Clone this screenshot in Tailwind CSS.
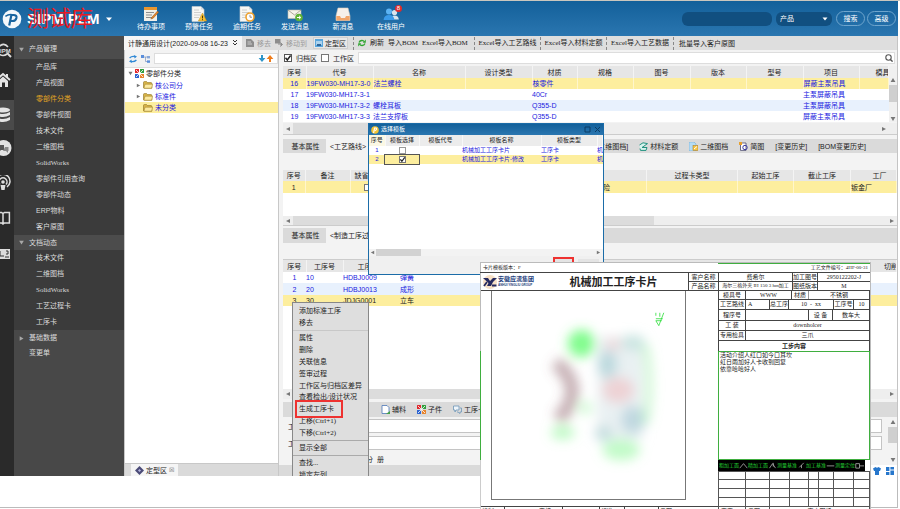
<!DOCTYPE html>
<html lang="zh-CN">
<head>
<meta charset="utf-8">
<title>SIPM PLM</title>
<script src="https://cdn.jsdelivr.net/npm/@tailwindcss/browser@4"></script>
</head>
<body class="bg-white">
<svg class="hidden">
  <symbol id="folder" viewBox="0 0 10 8"><path d="M.5 1.5Q.5.6 1.4.6H3.6L4.6 1.6H8Q8.8 1.6 8.8 2.4V7.2H1.3Q.5 7.2.5 6.4Z" fill="#d9b54a" stroke="#8c6f1c" stroke-width=".6"/><path d="M2 3.2H9.6L8.6 7.2H.9Z" fill="#fbe9a0" stroke="#9b7c22" stroke-width=".5"/></symbol>
  <symbol id="blocks" viewBox="0 0 10 10"><rect x="0" y="0" width="4.4" height="4.4" fill="#e0252b"/><rect x="5.6" y="0" width="4.4" height="4.4" fill="#2f9e3c"/><rect x="0" y="5.6" width="4.4" height="4.4" fill="#2b62d0"/><rect x="5.6" y="5.6" width="4.4" height="4.4" fill="#e8822a"/><path d="M1 1L9 9M9 1L1 9" stroke="#fff" stroke-width=".9"/></symbol>
  <symbol id="check" viewBox="0 0 8 8"><path d="M1.5 3.8L3.3 6L6.6 1.5" fill="none" stroke="#222" stroke-width="1.4"/></symbol>
  <symbol id="left" viewBox="0 0 6 6"><path d="M1 3L5 1V5Z" fill="#777"/></symbol>
  <symbol id="right" viewBox="0 0 6 6"><path d="M5 3L1 1V5Z" fill="#777"/></symbol>
  <symbol id="up" viewBox="0 0 6 6"><path d="M3 1L5.4 5H.6Z" fill="#777"/></symbol>
  <symbol id="down" viewBox="0 0 6 6"><path d="M3 5L5.4 1H.6Z" fill="#777"/></symbol>
  <symbol id="navdown" viewBox="0 0 6 6"><path d="M3 5.4L5.8 .8H.2Z" fill="#a8a8a8"/></symbol>
  <symbol id="navright" viewBox="0 0 6 6"><path d="M5.4 3L.8 .2V5.8Z" fill="#a8a8a8"/></symbol>
  <symbol id="sheet" viewBox="0 0 14 16"><path d="M1 .5H10L13 3.5V15.5H1Z" fill="#f7f7f4" stroke="#c9ced2" stroke-width=".6"/><path d="M10 .5V3.5H13" fill="#d5dbe0"/><path d="M3 4H8M3 6.5H10M3 9H10M3 11.5H8" stroke="#c4c4c4" stroke-width=".8"/></symbol>
</svg>
<div class="relative flex h-screen flex-col overflow-hidden border-t border-[#c9c6be] pr-[2px] font-['Liberation_Sans','Noto_Sans_CJK_SC',sans-serif] text-[7px] leading-[11px] text-[#222]">

  <header class="flex h-[35px] shrink-0 items-center bg-linear-to-b from-[#12609a] to-[#2a76b0] text-white">
    <div class="flex w-[127px] items-center gap-[5px] pl-[2px]">
      <svg class="h-5 w-5 shrink-0" viewBox="0 0 20 20"><circle cx="10" cy="10" r="9.3" fill="#f4f8fb"/><path d="M7.2 16.5L9.4 6H11.6Q15 6 14.4 8.9Q13.6 12 10.4 12H8.8" fill="none" stroke="#1a659f" stroke-width="2.2"/><path d="M3.4 7.4Q7 4.6 11.6 6" fill="none" stroke="#1a659f" stroke-width="1.4"/></svg>
      <h1 class="relative text-[15px] leading-5 font-bold whitespace-nowrap">SIPM PLM
        <span class="absolute top-0 left-0 text-[22px] leading-5 font-normal text-[#e81a22]">测试库</span>
      </h1>
      <svg class="h-2 w-2 shrink-0" viewBox="0 0 8 8"><path d="M1 2.5H7L4 6Z" fill="#fff"/></svg>
    </div>
    <nav class="flex leading-[9px]">
      <a href="#" class="flex w-12 flex-col items-center"><svg class="h-4 w-4" viewBox="0 0 16 16"><rect x="1" y="1" width="13" height="14" fill="#f2efe8"/><rect x="1" y="1" width="13" height="3" fill="#e9962f"/><path d="M3 6.5H11M3 9H9M3 11.5H9" stroke="#8e8e8e"/><path d="M14.5 5L9 11L7.8 13L10.2 12.2L15.6 6.2Z" fill="#e98424" stroke="#8a5524" stroke-width=".5"/></svg><span>待办事项</span></a>
      <a href="#" class="flex w-12 flex-col items-center"><svg class="h-4 w-4" viewBox="0 0 16 16"><use href="#sheet" width="14" height="16"/><path d="M11.5 7L15.6 15H7.4Z" fill="#f6c033" stroke="#c98f15" stroke-width=".5"/><path d="M11.5 9.6V12.4M11.5 13.2V14.2" stroke="#4a3a08"/></svg><span>预警任务</span></a>
      <a href="#" class="flex w-12 flex-col items-center"><svg class="h-4 w-4" viewBox="0 0 16 16"><use href="#sheet" width="14" height="16"/><circle cx="11" cy="11" r="4" fill="#fff" stroke="#efa22d" stroke-width="1.6"/><path d="M11 8.8V11.2H13" fill="none" stroke="#777" stroke-width=".8"/></svg><span>逾期任务</span></a>
      <a href="#" class="flex w-12 flex-col items-center"><svg class="h-4 w-4" viewBox="0 0 16 16"><rect x="1" y="4" width="13" height="8.5" fill="#f5f3ea" stroke="#bdb8a8" stroke-width=".6"/><path d="M1 4L7.5 9L14 4" fill="none" stroke="#9c9786" stroke-width=".8"/><circle cx="12" cy="11.5" r="3.8" fill="#5fb336"/><path d="M10 11.5H13.5M12 9.8L13.8 11.5L12 13.2" stroke="#fff" fill="none"/></svg><span>发送消息</span></a>
      <a href="#" class="flex w-12 flex-col items-center"><svg class="h-4 w-4" viewBox="0 0 16 16"><path d="M3 2H13L15 10V14.5H1V10Z" fill="#f6f1ea" stroke="#d9cabb" stroke-width=".6"/><path d="M1.3 10H5L6 12H10L11 10H14.7V14.5H1.3Z" fill="#f1a66a"/></svg><span>新消息</span></a>
      <a href="#" class="relative flex w-12 flex-col items-center"><svg class="h-4 w-4" viewBox="0 0 16 16"><circle cx="11.5" cy="6.5" r="2.6" fill="#d9e4ee"/><path d="M7.5 13.5Q8 9.6 11.5 9.6Q15.4 9.6 15.8 13.5Z" fill="#d9e4ee"/><circle cx="6" cy="5.5" r="3" fill="#5cb3f4"/><path d="M.6 14Q1 9 6 9Q11 9 11.4 14Z" fill="#3b9bea"/></svg><span>在线用户</span><b class="absolute -top-px right-[13px] h-[7px] w-[7px] rounded-full bg-[#e02b2b] text-center text-[6px] leading-[7px] font-normal">8</b></a>
    </nav>
    <form class="ml-auto flex items-center gap-1 pr-[2px]">
      <input type="text" aria-label="搜索关键字" class="h-[14px] w-[90px] rounded-md bg-[#114f80]">
      <div class="relative"><select aria-label="类型" class="h-[14px] w-14 appearance-none rounded-md bg-[#114f80] pl-1 text-[7px] text-white"><option>产品</option></select><svg class="pointer-events-none absolute top-[4px] right-1 h-[6px] w-[6px]" viewBox="0 0 6 6"><path d="M.5 1.5H5.5L3 4.6Z" fill="#fff"/></svg></div>
      <button type="button" class="h-[15px] w-[29px] rounded-full border border-[#6fa5cd]">搜索</button>
      <button type="button" class="-ml-[2px] h-[15px] w-[29px] rounded-full border border-[#6fa5cd]">高级</button>
    </form>
  </header>

  <div class="flex min-h-0 flex-1 border-r border-[#c4c4c4]">
    <aside class="flex w-[14px] shrink-0 flex-col bg-[#2a2a2a]">
      <a href="#" aria-label="查询" class="flex h-[30px] items-center"><svg class="h-4 w-[13px]" viewBox="0 0 13 16"><path d="M-1 3.5Q4 -1 8 4M-1 11Q3 14 7 11" fill="none" stroke="#ddd" stroke-width="1.6"/><path d="M7 10L11 14" stroke="#ddd" stroke-width="2"/><text x="-4" y="10" font-size="6" font-weight="bold" fill="#ddd">SIPM</text></svg></a>
      <a href="#" aria-label="主页" class="flex h-[34px] items-center pb-[6px]"><svg class="h-4 w-[13px]" viewBox="0 0 13 16"><path d="M-4 8L3 2L10 8" fill="none" stroke="#e4e4e4" stroke-width="2"/><path d="M-2 9L3 4.6L8 9V15H5V10.5H2V15H-2Z" fill="#e4e4e4"/><path d="M6 2H8V6L6 4Z" fill="#e4e4e4"/></svg></a>
      <a href="#" aria-label="产品数据" class="flex h-[30px] items-center bg-[#4a4a4a]"><svg class="h-4 w-[13px]" viewBox="0 0 13 16"><ellipse cx="3" cy="3" rx="7" ry="2.6" fill="#e4e4e4"/><path d="M-4 5Q3 9 10 5V8Q3 12 -4 8ZM-4 10Q3 14 10 10V13Q3 17 -4 13Z" fill="#e4e4e4"/></svg></a>
      <a href="#" aria-label="交流" class="flex h-9 items-center"><svg class="h-[18px] w-[13px]" viewBox="0 0 13 18"><circle cx="3.5" cy="9" r="8" fill="#e2e2e2"/><path d="M-3 6H4V11H1L-1 13V11H-3Z" fill="#555"/><path d="M5 8H8.5V12H8V14L6 12H3" fill="#888"/></svg></a>
      <a href="#" aria-label="广播" class="flex h-[34px] items-center"><svg class="h-4 w-[13px]" viewBox="0 0 13 16"><path d="M-1 12A7 7 0 1 1 7 12M0 9.5A4 4 0 1 1 6 9.5" fill="none" stroke="#ddd" stroke-width="1.5"/><circle cx="3" cy="7" r="1.8" fill="#ddd"/><path d="M.5 10H5.5L4.6 15H1.4Z" fill="#ddd"/></svg></a>
      <a href="#" aria-label="手册" class="flex h-9 items-center"><svg class="h-4 w-[13px]" viewBox="0 0 13 16"><path d="M-4 2.5H1.5L3 3.5L4.5 2.5H9.4V13H4.5L3 14L1.5 13H-4ZM3 3.5V14" fill="none" stroke="#ddd" stroke-width="1.5"/></svg></a>
      <a href="#" aria-label="终端" class="flex h-9 items-center"><svg class="h-[10px] w-[13px]" viewBox="0 0 13 10"><rect x="-2" y="0" width="12" height="10" fill="#ddd"/><path d="M0 2V7H4M6 2H8V5H6M5 8H9" stroke="#333" fill="none"/></svg></a>
    </aside>
    <nav class="w-[110px] shrink-0 bg-[#484848] leading-4 text-[#dcdcdc]">
      <a href="#" class="flex h-[23px] items-center gap-[5px] bg-[#4c4c4c] pt-[3px] pl-[5px]"><svg class="h-[5px] w-[5px]"><use href="#navdown"/></svg>产品管理</a>
      <div class="flex flex-col bg-[#3b3b3b] pl-[22px]">
        <a href="#">产品库</a><a href="#">产品视图</a><a href="#" class="text-[#e2a424]">零部件分类</a><a href="#">零部件视图</a><a href="#">技术文件</a><a href="#">二维图档</a><a href="#" class="font-['Liberation_Serif']">SolidWorks</a><a href="#">零部件引用查询</a><a href="#">零部件动态</a><a href="#">ERP物料</a><a href="#">客户原图</a>
      </div>
      <a href="#" class="flex h-[15px] items-center gap-[5px] bg-[#4c4c4c] pl-[5px]"><svg class="h-[5px] w-[5px]"><use href="#navdown"/></svg>文档动态</a>
      <div class="flex flex-col bg-[#3b3b3b] pl-[22px]">
        <a href="#">技术文件</a><a href="#">二维图档</a><a href="#" class="font-['Liberation_Serif']">SolidWorks</a><a href="#">工艺过程卡</a><a href="#">工序卡</a>
      </div>
      <a href="#" class="flex h-4 items-center gap-[5px] pl-[5px]"><svg class="h-[5px] w-[5px]"><use href="#navright"/></svg>基础数据</a>
      <a href="#" class="block h-[14px] pl-[15px] leading-[14px]">变更单</a>
    </nav>

    <main class="flex min-w-0 flex-1 flex-col bg-[#f3f3f3]">
      <div class="flex h-[14px] shrink-0 items-center bg-[#dedede] whitespace-nowrap">
        <button class="flex h-full w-[118px] items-center gap-1 bg-[#f6f6f6] pl-1">计静通用设计(2020-09-08 16-23<svg class="h-[6px] w-[6px] shrink-0" viewBox="0 0 6 6"><path d="M1 0L3 2L5 0M1 3L3 5L5 3" fill="none" stroke="#333"/></svg></button>
        <button class="flex w-[33px] items-center gap-[3px] pl-1 text-[#9a9a9a]" disabled><svg class="h-2 w-2" viewBox="0 0 8 8"><path d="M0 0H5L8 3V8H0Z" fill="#8d8d8d"/><path d="M1.5 3H5M1.5 5H6" stroke="#ccc"/></svg>移去</button>
        <button class="flex w-[38px] items-center gap-[3px] text-[#9a9a9a]" disabled><svg class="h-2 w-2" viewBox="0 0 8 8"><path d="M0 0H5V4H0ZM3 5H7M5.5 3.5L7.5 5.5L5.5 7.5" fill="#8d8d8d" stroke="#8d8d8d"/></svg>移动到</button>
        <button class="mr-[5px] flex h-3 items-center gap-[2px] border border-[#cfcfcf] bg-[#e8e8e8] px-px"><svg class="h-2 w-2" viewBox="0 0 8 8"><rect width="8" height="8" fill="#5aa6dc"/><path d="M1 5H7M1 3H7" stroke="#fff"/><rect x="2" y="5" width="4" height="2" fill="#2c669b"/></svg>定型区</button>
        <div class="flex h-[13px] w-[121px] items-center gap-1 border-l border-dashed border-[#888] pl-1 font-['Liberation_Serif','Noto_Sans_CJK_SC',serif]"><button class="flex items-center gap-1"><svg class="h-2 w-2" viewBox="0 0 8 8"><path d="M1 3.4Q2 1 5 1.6L6 2.4M7 4.6Q6 7 3 6.4L2 5.6" fill="none" stroke="#2fa52f" stroke-width="1.3"/><path d="M7.8.6V3.8H4.8ZM.2 7.4V4.2H3.2Z" fill="#2fa52f"/></svg>刷新</button><button>导入BOM</button><button>Excel导入BOM</button></div>
        <div class="flex h-[13px] w-[66px] items-center justify-center border-l border-dashed border-[#888] font-['Liberation_Serif','Noto_Sans_CJK_SC',serif]"><button>Excel导入工艺路线</button></div>
        <div class="flex h-[13px] w-[66px] items-center justify-center border-l border-dashed border-[#888] font-['Liberation_Serif','Noto_Sans_CJK_SC',serif]"><button>Excel导入材料定额</button></div>
        <div class="flex h-[13px] w-[67px] items-center justify-center border-l border-dashed border-[#888] font-['Liberation_Serif','Noto_Sans_CJK_SC',serif]"><button>Excel导入工艺数据</button></div>
        <div class="flex h-[13px] items-center border-l border-dashed border-[#888] px-[5px]"><button>批量导入客户原图</button></div>
      </div>

      <div class="flex min-h-0 flex-1">
        <section class="flex w-[155px] shrink-0 flex-col border-x border-[#c8c8c8]">
          <div class="flex h-[17px] shrink-0 items-center gap-1 pl-1">
            <svg class="h-2 w-2 shrink-0" viewBox="0 0 8 8"><path d="M.6 3Q3 .6 6 1.6M7.4 5Q5 7.4 2 6.4" fill="none" stroke="#3189d6" stroke-width="1.3"/><path d="M5 0L8 1.6L5.6 3.6ZM3 8L0 6.4L2.4 4.4Z" fill="#3189d6"/></svg>
            <svg class="h-2 w-[9px] shrink-0" viewBox="0 0 9 8"><rect y="0" width="3" height="3" fill="#5a8edb"/><rect x="6" y="1" width="3" height="2.4" fill="#88a8da"/><rect x="6" y="5.4" width="3" height="2.4" fill="#5a8edb"/><path d="M3 2H6M4.5 2V6.5H6" fill="none" stroke="#7a93bd" stroke-width=".7"/></svg>
            <div class="relative min-w-0 flex-1"><input type="text" aria-label="查找分类" class="block h-[11px] w-full border border-[#ddd] bg-white"><svg class="absolute top-[2px] right-1 h-[7px] w-4" viewBox="0 0 16 7"><path d="M3 0V3H.6L4 7L7.4 3H5V0Z" fill="#2d95c9"/><path d="M11 7V4H8.6L12 0L15.4 4H13V7Z" fill="#ee7c1c"/></svg></div>
          </div>
          <ul class="min-h-0 flex-1 border-t border-[#ddd] bg-white text-[#1a1ae0]">
            <li class="flex h-[11px] items-center gap-[2px] pl-[3px] text-[#222]"><svg class="h-[5px] w-[5px]" viewBox="0 0 6 6"><use href="#down"/></svg><svg class="h-[9px] w-[9px]"><use href="#blocks"/></svg>零部件分类</li>
            <li class="flex h-3 items-center gap-[2px] pl-[11px]"><svg class="h-[5px] w-[5px]" viewBox="0 0 6 6"><use href="#right"/></svg><svg class="h-2 w-[10px]"><use href="#folder"/></svg>核公司分</li>
            <li class="flex h-[11px] items-center gap-[2px] pl-[11px]"><svg class="h-[5px] w-[5px]" viewBox="0 0 6 6"><use href="#right"/></svg><svg class="h-2 w-[10px]"><use href="#folder"/></svg>标准件</li>
            <li class="flex h-[11px] items-center gap-[2px] bg-[#fdee9e] pl-[18px]"><svg class="h-2 w-[10px]"><use href="#folder"/></svg>未分类</li>
          </ul>
          <div class="flex h-[13px] shrink-0 items-center border-t border-[#c8c8c8] bg-[#dadada] pl-[6px]"><button class="flex h-full items-center gap-[2px] bg-[#f5f5f5] px-1"><svg class="h-[9px] w-[9px]" viewBox="0 0 9 9"><path d="M4.5 0L9 4.5L4.5 9L0 4.5Z" fill="#4c4c78"/><path d="M4.5 3L6 4.5L4.5 6L3 4.5Z" fill="#b6b6e0"/></svg>定型区<span class="text-[6px] text-[#666]">☒</span></button></div>
        </section>

        <section class="flex min-w-0 flex-1 flex-col pl-1">
          <div class="flex h-4 shrink-0 items-center gap-1 pr-[2px] pl-px">
            <label class="flex items-center gap-1"><span class="relative h-2 w-2"><input type="checkbox" checked class="peer block h-2 w-2 appearance-none border border-[#555] bg-white"><svg class="pointer-events-none absolute inset-0 hidden h-2 w-2 peer-checked:block"><use href="#check"/></svg></span>归档区</label>
            <label class="flex items-center gap-1"><input type="checkbox" class="block h-2 w-2 appearance-none border border-[#777] bg-white">工作区</label>
            <div class="relative min-w-0 flex-1"><input type="search" aria-label="查询零部件" class="block h-3 w-full border border-[#ddd] bg-white"><svg class="absolute top-[2px] right-[2px] h-2 w-2" viewBox="0 0 8 8"><circle cx="3.5" cy="3.5" r="2.7" fill="none" stroke="#555" stroke-width="1.1"/><path d="M5.4 5.4L7.6 7.6" stroke="#555" stroke-width="1.4"/></svg></div>
          </div>

          <div class="flex shrink-0">
            <table class="w-full min-w-0 flex-1 table-fixed border-collapse bg-white whitespace-nowrap text-[#1a1ae0]">
              <colgroup><col class="w-[23px]"><col class="w-[67px]"><col class="w-[92px]"><col class="w-[67px]"><col class="w-[45px]"><col class="w-14"><col class="w-[57px]"><col class="w-14"><col class="w-[57px]"><col class="w-14"><col></colgroup>
              <thead class="bg-[#e6e6e6] text-[#222]"><tr class="h-3 *:overflow-hidden *:border-r *:border-[#f4f4f4] *:p-0 *:font-normal"><th>序号</th><th>代号</th><th>名称</th><th>设计类型</th><th>材质</th><th>规格</th><th>图号</th><th>版本</th><th>型号</th><th>项目</th><th class="pl-4! text-left">模具</th></tr></thead>
              <tbody>
                <tr class="h-[11px] bg-[#fdee9e] *:border-r *:border-[#fff6cc] *:p-0"><td class="text-center">16</td><td>19FW030-MH17-3-0</td><td>法兰螺栓</td><td></td><td>核零件</td><td></td><td></td><td></td><td></td><td>屏蔽主泵吊具</td><td></td></tr>
                <tr class="h-[11px] *:p-0"><td class="text-center">17</td><td>19FW030-MH17-3-1</td><td></td><td></td><td>40Cr</td><td></td><td></td><td></td><td></td><td>主泵屏蔽吊具</td><td></td></tr>
                <tr class="h-[11px] bg-[#e8f1fd] *:p-0"><td class="text-center">18</td><td>19FW030-MH17-3-2</td><td>螺栓耳板</td><td></td><td>Q355-D</td><td></td><td></td><td></td><td></td><td>主泵屏蔽吊具</td><td></td></tr>
                <tr class="h-[11px] *:p-0"><td class="text-center">19</td><td>19FW030-MH17-3-3</td><td>法兰支撑板</td><td></td><td>Q355-D</td><td></td><td></td><td></td><td></td><td>屏蔽主泵吊具</td><td></td></tr>
              </tbody>
            </table>
            <div class="flex w-2 shrink-0 flex-col items-center justify-end gap-[2px] bg-[#f0f0f0]"><svg class="h-[6px] w-[6px]"><use href="#up"/></svg><div class="h-[17px] w-full bg-[#cfcfcf]"></div><svg class="mt-3 h-[6px] w-[6px]"><use href="#down"/></svg></div>
          </div>
          <div class="mt-px flex h-3 shrink-0 items-center border-b border-[#ccc] bg-[#eee]"><svg class="mx-[2px] h-[6px] w-[6px]"><use href="#left"/></svg><div class="h-full w-[300px] bg-[#dcdcdc]"></div><svg class="mr-[10px] ml-auto h-[6px] w-[6px]"><use href="#right"/></svg></div>

          <div class="mt-1 flex h-[14px] shrink-0 items-stretch bg-[#dadada] whitespace-nowrap">
            <button class="w-[43px] pl-[2px] text-center">基本属性</button>
            <button class="w-[60px] bg-[#f3f3f3] pl-1 text-left">&lt;工艺路线&gt;</button>
            <div class="ml-auto flex items-center gap-[11px] pr-[31px]">
              <button>[二维图档]</button>
              <button class="flex items-center gap-[2px]"><svg class="h-[9px] w-[9px]" viewBox="0 0 9 9"><path d="M.5 3L4 .8L8.5 1.6L3 5.5H8L7 8.4H1.5L1 6.5" fill="#d6f3ee" stroke="#21917f" stroke-width="1"/></svg>材料定额</button>
              <button class="flex items-center gap-[2px]"><svg class="h-[9px] w-[9px]" viewBox="0 0 9 9"><path d="M0 0H5L7 2V9H0Z" fill="#b5dcf5" stroke="#62a3cf" stroke-width=".5"/><rect x="4" y="3.5" width="5" height="5" fill="#f7c546" stroke="#a5761e" stroke-width=".5"/><path d="M5 7L8 4.5" stroke="#fff"/></svg>二维图档</button>
              <button class="flex items-center gap-[2px]"><svg class="h-[9px] w-[9px]" viewBox="0 0 9 9"><path d="M1.5 1H7V8.4H1.5Z" fill="#fff" stroke="#35355f" stroke-width=".7"/><path d="M0 0H3V3H0Z" fill="#e8a02c"/><circle cx="6" cy="5.5" r="2.2" fill="none" stroke="#3b3ba0" stroke-width="1"/></svg>简图</button>
              <button>[变更历史]</button>
              <button>[BOM变更历史]</button>
            </div>
          </div>
          <div class="h-[17px] shrink-0"></div>
          <div class="h-[46px] shrink-0 bg-white">
            <table class="w-full table-fixed border-collapse whitespace-nowrap">
              <colgroup><col class="w-[22px]"><col class="w-[45px]"><col class="w-9"><col><col class="w-[44px]"><col class="w-[91px]"><col class="w-14"><col class="w-[57px]"><col class="w-[46px]"></colgroup>
              <thead class="bg-[#e6e6e6]"><tr class="h-[11px] *:overflow-hidden *:border-r *:border-[#f4f4f4] *:p-0 *:font-normal"><th>序号</th><th>备注</th><th class="pl-1! text-left">缺省</th><th></th><th></th><th>过程卡类型</th><th>起始工序</th><th>截止工序</th><th class="pl-3!">工厂</th></tr></thead>
              <tbody><tr class="h-3 bg-[#fdee9e] *:border-r *:border-[#fff6cc] *:p-0"><td class="text-center">1</td><td></td><td><input type="checkbox" aria-label="缺省" class="ml-[13px] block h-[7px] w-[7px] appearance-none border border-[#777] bg-white"></td><td></td><td>险</td><td></td><td></td><td></td><td>钣金厂</td></tr></tbody>
            </table>
          </div>
          <div class="flex h-[10px] shrink-0 items-center border-b border-[#ccc] bg-[#eee]"><svg class="mx-[2px] h-[6px] w-[6px]"><use href="#left"/></svg><div class="h-full w-[361px] bg-[#dcdcdc]"></div><svg class="mr-[2px] ml-auto h-[6px] w-[6px]"><use href="#right"/></svg></div>

          <div class="mt-[2px] flex h-[15px] shrink-0 bg-[#dadada] whitespace-nowrap"><button class="w-[43px] pl-[2px] text-center">基本属性</button><button class="w-[60px] bg-[#f3f3f3] pl-1 text-left">&lt;制造工序过程&gt;</button></div>
          <div class="h-4 shrink-0"></div>
          <div class="min-h-0 flex-1 border-t border-[#ccc] bg-white">
            <table class="w-full table-fixed border-collapse whitespace-nowrap text-[#1a1ae0]">
              <colgroup><col class="w-[23px]"><col class="w-[37px]"><col class="w-[57px]"><col class="w-[60px]"><col><col class="w-[27px]"></colgroup>
              <thead class="bg-[#e6e6e6] text-[#222]"><tr class="h-3 *:border-r *:border-[#f4f4f4] *:p-0 *:font-normal"><th>序号</th><th>工序号</th><th>工序编码</th><th>工序名称</th><th></th><th class="overflow-hidden pl-[14px]! text-left">切削</th></tr></thead>
              <tbody>
                <tr class="h-[11px] *:p-0"><td class="text-center">1</td><td>10</td><td>HDBJ0009</td><td>弹簧</td><td></td><td></td></tr>
                <tr class="h-3 bg-[#e8f1fd] *:p-0"><td class="text-center">2</td><td>20</td><td>HDBJ0013</td><td>成形</td><td></td><td></td></tr>
                <tr class="h-[11px] bg-[#fdee9e] text-[#222] *:p-0"><td class="text-center">3</td><td>30</td><td>JDJG0001</td><td>立车</td><td></td><td></td></tr>
              </tbody>
            </table>
          </div>
          <div class="flex h-[10px] shrink-0 items-center bg-[#eee]"><svg class="mx-[2px] h-[6px] w-[6px]"><use href="#left"/></svg><div class="h-full w-[400px] bg-[#dcdcdc]"></div><svg class="mr-[2px] ml-auto h-[6px] w-[6px]"><use href="#right"/></svg></div>
          <div class="mt-[3px] flex h-[15px] shrink-0 items-center gap-[11px] bg-[#dadada] pl-[98px] whitespace-nowrap">
            <button class="flex items-center gap-[2px]"><svg class="h-[9px] w-[9px]" viewBox="0 0 9 9"><path d="M1 .5H6L8 2.5V8.5H1Z" fill="#fff" stroke="#4b77b8" stroke-width=".8"/><path d="M5 9L9 6V9Z" fill="#44a047"/></svg>辅料</button>
            <button class="flex items-center gap-[2px]"><svg class="h-[9px] w-[9px]" viewBox="0 0 10 10"><use href="#blocks"/></svg>子件</button>
            <button class="flex items-center gap-[2px]"><svg class="h-[9px] w-[9px]" viewBox="0 0 9 9"><path d="M.5 1H6V5H3L2 7V5H.5Z" fill="#eef5fb" stroke="#6c95b8" stroke-width=".8"/><path d="M7 3H8.5V7H7V8.5L5 7H4" fill="none" stroke="#6c95b8" stroke-width=".8"/></svg>工序卡</button>
          </div>
          <div class="flex h-12 shrink-0">
            <form class="flex min-w-0 flex-1 flex-col gap-[3px] overflow-hidden pt-[2px] pr-[6px] pl-[5px]">
              <label class="flex h-[14px] shrink-0 items-center gap-1"><span class="w-[72px]">工序</span><input type="text" class="h-full min-w-0 flex-1 border border-[#c4c4c4] bg-white"></label>
              <label class="flex h-[14px] shrink-0 items-center gap-1"><span class="w-[72px]">工时</span><input type="text" class="h-full min-w-0 flex-1 border border-[#c4c4c4] bg-white"></label>
              <div class="pl-[78px] leading-[14px]">分&nbsp; 册</div>
            </form>
            <div class="flex w-[9px] shrink-0 flex-col items-center gap-[2px] pt-[2px]"><svg class="h-[6px] w-[6px] shrink-0"><use href="#up"/></svg><div class="h-4 w-full shrink-0 bg-[#cfcfcf]"></div><svg class="mt-3 h-[6px] w-[6px] shrink-0"><use href="#down"/></svg></div>
          </div>
          <div class="-ml-1 flex h-[11px] shrink-0 justify-end bg-[#dadada]">
            <div class="flex h-full w-7 items-center justify-center gap-[5px] bg-white"><svg class="h-2 w-2" viewBox="0 0 8 8"><path d="M0 1.5L2.5 0Q4 1.5 5.5 0L8 1.5L7 4H6V8H2V4H1Z" fill="#2777cc"/></svg><svg class="h-2 w-2" viewBox="0 0 8 8"><path d="M0 0H3.4V4H0ZM4.4 0H8V2.6H4.4ZM0 5H3.4V8H0ZM4.4 3.6H8V8H4.4Z" fill="#2777cc"/></svg></div>
          </div>
        </section>
      </div>
    </main>
  </div>
  <footer class="mb-px h-8 shrink-0 border-r border-b border-[#bbb] bg-white"></footer>

  <!-- Row context menu -->
  <menu class="absolute top-[301px] left-[292px] flex h-[174px] w-[77px] flex-col overflow-hidden border border-b-0 border-[#888] bg-[#dedede] pt-[2px] font-['Liberation_Serif','Noto_Sans_CJK_SC',serif] leading-3 whitespace-nowrap *:shrink-0">
    <button class="pl-[6px] text-left">添加标准工序</button><button class="pl-[6px] text-left">移去</button>
    <hr class="my-px border-[#c8c8c8]">
    <button class="pl-[6px] text-left">属性</button><button class="pl-[6px] text-left">删除</button><button class="pl-[6px] text-left">关联信息</button><button class="pl-[6px] text-left">签审过程</button><button class="pl-[6px] text-left">工作区与归档区差异</button><button class="h-[11px] pl-[6px] text-left leading-[11px]">查看检出/设计状况</button>
    <button class="relative pl-[6px] text-left">生成工序卡<span class="absolute -top-[3px] left-[2px] h-[18px] w-12 border-2 border-[#ee3230]"></span></button>
    <button class="pl-[6px] text-left">上移(Ctrl+1)</button><button class="pl-[6px] text-left">下移(Ctrl+2)</button>
    <hr class="my-px border-[#aaa]">
    <button class="pl-[6px] text-left">显示全部</button>
    <hr class="my-px border-[#aaa]">
    <button class="pl-[6px] text-left">查找...</button><button class="pl-[6px] text-left">锁定左列</button>
  </menu>

  <!-- Template chooser -->
  <div role="dialog" aria-label="选择模板" class="absolute top-[122px] left-[368px] flex h-[152px] w-[236px] flex-col border border-[#1b6ca8] bg-[#f0f0f0] text-[6px] leading-[9px]">
    <div class="flex h-[11px] shrink-0 items-center gap-[2px] bg-linear-to-b from-[#12609a] to-[#2a76b0] px-[2px] text-white"><svg class="h-2 w-2" viewBox="0 0 8 8"><circle cx="4" cy="4" r="3.8" fill="#f2c335"/><path d="M2.6 7L3.6 2H5Q6.6 3.4 4 4.6" fill="none" stroke="#fff" stroke-width="1.2"/></svg>选择模板<svg class="ml-auto h-[7px] w-[17px]" viewBox="0 0 17 7"><path d="M1 1H6V6H1ZM11 1L16 6M16 1L11 6" fill="none" stroke="#0b3d66" stroke-width="1"/></svg></div>
    <div class="min-h-0 flex-1 bg-white">
      <table class="w-full table-fixed border-collapse whitespace-nowrap text-[#1a1ae0]">
        <colgroup><col class="w-4"><col class="w-[34px]"><col class="w-[43px]"><col class="w-[79px]"><col class="w-14"><col></colgroup>
        <thead class="bg-[#ececec] text-[#222]"><tr class="h-[11px] *:border-r *:border-[#f8f8f8] *:p-0 *:font-normal"><th class="bg-[#fbf8e4]">序号</th><th>模板选择</th><th>模板代号</th><th>模板名称</th><th>模板类型</th><th></th></tr></thead>
        <tbody>
          <tr class="h-[9px] *:p-0"><td class="text-center">1</td><td><input type="checkbox" aria-label="选择模板1" class="mx-auto block h-[7px] w-[7px] appearance-none border border-[#999] bg-white"></td><td></td><td>机械加工工序卡片</td><td>工序卡</td><td class="overflow-hidden">机</td></tr>
          <tr class="h-[9px] bg-[#fdee9e] *:p-0"><td class="text-center">2</td><td class="outline outline-[#555]"><span class="relative mx-auto block h-[7px] w-[7px]"><input type="checkbox" checked aria-label="选择模板2" class="peer block h-[7px] w-[7px] appearance-none border border-[#777] bg-white"><svg class="pointer-events-none absolute inset-0 hidden h-[7px] w-[7px] peer-checked:block"><use href="#check"/></svg></span></td><td></td><td>机械加工工序卡片-修改</td><td>工序卡</td><td class="overflow-hidden">机</td></tr>
        </tbody>
      </table>
    </div>
    <div class="flex h-[7px] shrink-0 items-center bg-[#f3f3f3]"><svg class="mx-px h-[5px] w-[5px]" viewBox="0 0 6 6"><use href="#left"/></svg><div class="h-full w-[45px] bg-[#d2d2d2]"></div><svg class="mr-[2px] ml-auto h-[5px] w-[5px]" viewBox="0 0 6 6"><use href="#right"/></svg></div>
    <div class="flex h-[18px] shrink-0 justify-end gap-1 pt-px pr-1"><button aria-label="确定" class="h-3 w-[21px] border-2 border-[#ee3230] bg-[#e4e4e4]"></button><button aria-label="取消" class="mt-[2px] h-3 w-[21px] bg-[#e4e4e4]"></button></div>
  </div>

  <!-- Process card preview -->
  <article class="absolute top-[261px] left-[480px] flex h-[260px] w-[391px] flex-col border-t border-r border-[#bbb] bg-white font-['Liberation_Serif','Noto_Sans_CJK_SC',serif] text-[6px] leading-[8px] text-[#222]">
    <div class="flex h-[9px] shrink-0 items-center border-l border-[#bbb]"><span class="flex-1 pl-[2px] text-[5px]">卡片模板版本：F</span><span class="h-full w-[152px] border-t border-[#3fae3f] pr-[2px] text-right text-[5px]">工艺文件编号：4HF-00-31</span></div>
    <div class="flex min-h-0 flex-1 border-t border-[#444]">
      <div class="flex w-px shrink-0 flex-col"><div class="h-[78px] bg-[#bbb]"></div><div class="h-[109px] bg-[#3fae3f]"></div><div class="flex-1 bg-[#ccc]"></div></div>
      <div class="flex min-w-0 flex-1 flex-col">
        <div class="flex h-[18px] shrink-0 items-center border-b border-[#444]">
          <svg class="ml-[2px] h-[14px] w-[14px] shrink-0" viewBox="0 0 14 14"><circle cx="7" cy="7" r="7" fill="#f7e0c6"/><path d="M0 3H5L7 6L10 3H14L10 7L8 11H4L5.5 8Z" fill="#262a60"/><path d="M1 11L4 7M9 10.5H13.5" stroke="#262a60" stroke-width="1.8"/></svg>
          <div class="w-[42px] pl-px text-[6px] leading-[7px] font-bold whitespace-nowrap text-[#24407c]">安徽应流集团<div class="font-['Liberation_Sans'] text-[3px] leading-[4px]">ANHUI YINGLIU GROUP</div></div>
          <h2 class="flex-1 text-center text-[11px] leading-4 font-bold whitespace-nowrap">机械加工工序卡片</h2>
          <div class="h-full w-[30px] border-l border-[#444] text-center leading-[9px]"><div class="h-[9px] border-b border-[#444]">客户名称</div><div>产品名称</div></div>
        </div>
        <div class="mr-8 ml-[10px] h-[209px] shrink-0 border-x border-b border-[#777]">
          <svg class="h-full w-full" viewBox="0 0 194 210">
            <defs><filter id="soft" x="-50%" y="-50%" width="200%" height="200%"><feGaussianBlur stdDeviation="6"/></filter></defs>
            <g filter="url(#soft)">
              <circle cx="90" cy="53" r="14" fill="#4dfb5e" opacity=".7"/>
              <path d="M64 72Q96 100 66 130" fill="none" stroke="#8e6068" stroke-width="14" opacity=".5"/>
              <ellipse cx="71" cy="143" rx="12" ry="7" fill="#7df58a" opacity=".5"/>
              <circle cx="94" cy="118" r="7" fill="#a5f7ae" opacity=".5"/>
              <rect x="106" y="46" width="46" height="104" fill="#dfe9ec" opacity=".7"/>
              <ellipse cx="116" cy="74" rx="10" ry="14" fill="#9fcbd2" opacity=".6"/>
              <ellipse cx="142" cy="130" rx="12" ry="14" fill="#9fc4d2" opacity=".55"/>
              <ellipse cx="112" cy="144" rx="9" ry="8" fill="#9fc9cc" opacity=".5"/>
              <ellipse cx="142" cy="52" rx="12" ry="8" fill="#a9d8cf" opacity=".5"/>
              <path d="M154 54Q162 95 154 134" fill="none" stroke="#8ff09a" stroke-width="7" opacity=".5"/>
              <ellipse cx="127" cy="100" rx="16" ry="13" fill="#f3b3b8" opacity=".5"/>
              <ellipse cx="122" cy="54" rx="8" ry="7" fill="#f0c6ca" opacity=".5"/>
              <ellipse cx="130" cy="160" rx="19" ry="11" fill="#8ff79a" opacity=".55"/>
            </g>
            <path d="M165 22V25M169 22V26M165 28H172M165 30H171M165 30L168 35L173 22" fill="none" stroke="#27dd35" stroke-width=".8"/>
          </svg>
        </div>
        <div class="mt-[6px] flex border-t border-[#444] *:border-r *:border-[#444] *:pl-px"><span class="w-6">编制</span><span class="w-[58px] pl-[34px]!">审核</span><span class="w-[37px]"></span><span class="w-[25px]">标准</span><span class="w-[34px]"></span><span class="border-r-0!">日期</span></div>
      </div>
      <div class="w-[152px] shrink-0">
        <div class="flex h-[9px] border-b border-[#444] text-center whitespace-nowrap"><span class="flex-1 border-l border-[#444]">费希尔</span><span class="w-[26px] border-x border-[#444]">加工图号</span><span class="w-[52px]">2950122202-J</span></div>
        <div class="flex h-[9px] border-b border-[#444] text-center whitespace-nowrap"><span class="flex-1 border-l border-[#444] text-[5px]">海尔三格外夹 IH 150 3 hm加工</span><span class="w-[26px] border-x border-[#444]">图纸版本</span><span class="w-[52px]">M</span></div>
        <div class="border-x border-[#444] text-center whitespace-nowrap">
          <div class="flex h-[9px] border-b border-[#444]"><span class="w-[27px] border-r border-[#444]">模具号</span><span class="flex-1">WWW</span><span class="w-[17px] border-l border-[#444]">材质</span><span class="w-[61px] border-l border-[#999]">不锈钢</span></div>
          <div class="flex h-[10px] border-b border-[#444] leading-[9px]"><span class="w-[27px] border-r border-[#444]">工艺路线</span><span class="flex-1 pl-[2px] text-left">A</span><span class="w-5 border-x border-[#444]">总工序</span><span class="w-[44px]">10 &nbsp;- &nbsp;xx</span><span class="w-[21px] border-x border-[#444]">工序号</span><span class="w-[15px]">10</span></div>
          <div class="flex h-[11px] border-b border-[#444] leading-[10px]"><span class="w-[27px] border-r border-[#444]">程序号</span><span class="flex-1"></span><span class="w-[25px] border-x border-[#444]">设 备</span><span class="w-9">数车大</span></div>
          <div class="flex h-[10px] border-b border-[#444] leading-[9px]"><span class="w-[27px] border-r border-[#444]">工 装</span><span class="flex-1">downholcer</span></div>
          <div class="flex h-[10px] border-b border-[#444] leading-[9px]"><span class="w-[27px] border-r border-[#444]">专用检具</span><span class="flex-1">三爪</span></div>
          <h3 class="h-[10px] leading-[10px] font-bold">工步内容</h3>
        </div>
        <div class="h-[109px] border border-[#3fae3f] pl-px leading-[7px]">活动介绍人红口如今口耳坎<br>虹日雨加好人卡收到回复<br>依靠哈哈好人</div>
        <div class="flex h-[11px] w-[147px] items-center bg-black pl-px text-[5px] text-[#22cc33] *:shrink-0 *:whitespace-nowrap">
          <span>粗加工面</span><svg class="h-[9px] w-[9px]" viewBox="0 0 12 9"><path d="M1 8L6 2L11 8" fill="none" stroke="#bbb"/></svg><span>精加工面</span><svg class="h-[9px] w-[9px]" viewBox="0 0 12 9"><path d="M2 8L6 2L10 8M7 1V6" fill="none" stroke="#bbb"/></svg><span>测量基准</span><svg class="h-[9px] w-[9px]" viewBox="0 0 12 9"><path d="M3 7L9 1M6 4V8" fill="none" stroke="#bbb"/></svg><span>加工基准</span><svg class="h-[9px] w-[9px]" viewBox="0 0 12 9"><path d="M1 5H11" stroke="#bbb"/></svg><span>测量定位</span><svg class="h-[9px] w-[9px]" viewBox="0 0 12 9"><path d="M1 2H6V8H1ZM6 5H12" fill="none" stroke="#bbb"/></svg>
        </div>
        <table class="w-full table-fixed border-collapse">
          <colgroup><col class="w-[27px]"><col class="w-6"><col class="w-5"><col class="w-[19px]"><col class="w-[10px]"><col class="w-[15px]"><col class="w-5"><col></colgroup>
          <tbody class="*:*:border *:*:border-[#555] *:*:p-0">
            <tr class="h-2"><td></td><td></td><td></td><td></td><td></td><td></td><td></td><td></td></tr>
            <tr class="h-[9px]"><td></td><td></td><td></td><td></td><td></td><td></td><td></td><td></td></tr>
            <tr class="h-[9px]"><td></td><td></td><td></td><td></td><td></td><td></td><td></td><td></td></tr>
            <tr class="h-[9px]"><td></td><td></td><td></td><td></td><td></td><td></td><td></td><td></td></tr>
            <tr class="h-2"><td class="pl-[2px]!">审定</td><td class="pl-[2px]!">日期</td><td colspan="6" class="text-center">客户图纸</td></tr>
          </tbody>
        </table>
      </div>
    </div>
  </article>
</div>
</body>
</html>
